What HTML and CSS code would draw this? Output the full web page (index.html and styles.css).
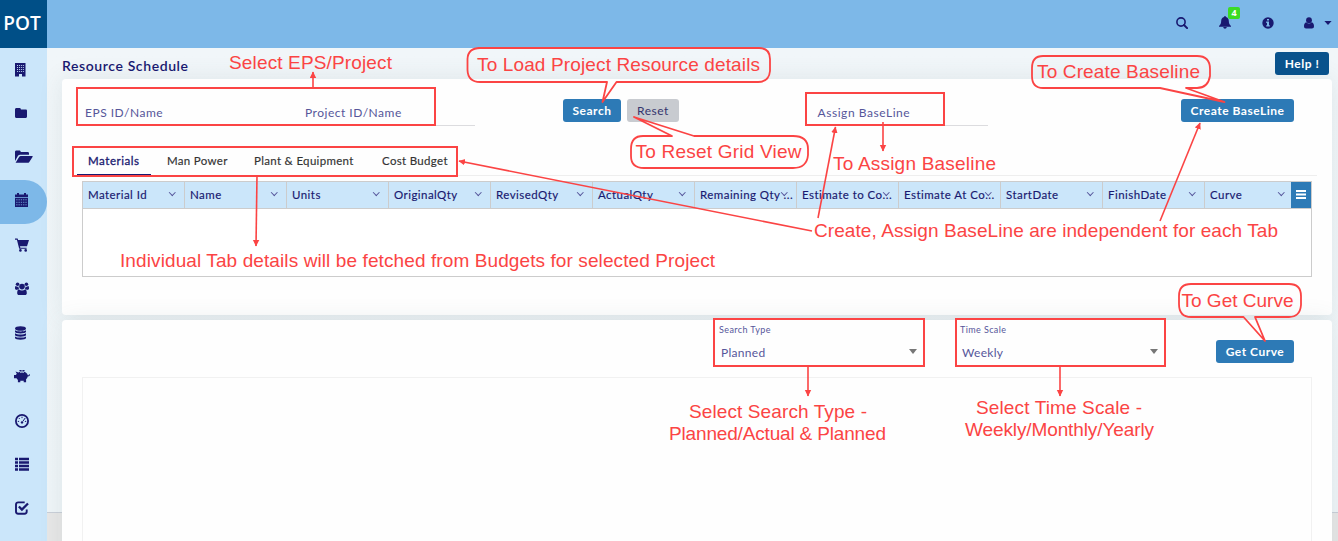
FILE: index.html
```
<!DOCTYPE html>
<html lang="en">
<head>
<meta charset="utf-8">
<title>Resource Schedule</title>
<link rel="stylesheet" href="styles.css">
</head>
<body>
<div class="app">
  <header class="topbar">
    <div class="logo">POT</div>
    <nav class="tools">
      <svg class="tool" width="12" height="12" viewBox="0 0 12 12"><circle cx="5" cy="5" r="4.100" fill="none" stroke="currentColor" stroke-width="1.600"/><path d="M8 8l3.100 3.100" stroke="currentColor" stroke-width="2" stroke-linecap="round"/></svg>
      <span class="bell"><svg width="12" height="13" viewBox="0 0 12 13"><path d="M6 0c.6 0 .9.4.9.9C8.900 1.300 9.800 2.900 9.800 4.800c0 2.800.8 4 2.200 5.200v.7H0V10c1.400-1.200 2.200-2.400 2.200-5.200 0-1.900.9-3.500 2.900-3.900 0-.5.3-.9.9-.9zM4.300 11.100h3.400c0 1-.7 1.700-1.700 1.700s-1.700-.7-1.700-1.700z" fill="currentColor"/></svg><span class="badge">4</span></span>
      <svg class="tool info" width="12" height="12" viewBox="0 0 12 12"><circle cx="6" cy="6" r="5.700" fill="currentColor"/><path d="M5 2h2v1.600H5zM4.200 4.600H7v3.700h.8v1.300H4.200V8.300H5V5.900h-.8z" fill="#7db8e8"/></svg>
      <svg class="tool user" width="10" height="12" viewBox="0 0 10 12"><circle cx="5" cy="3.200" r="2.900" fill="currentColor"/><path d="M2.300 5.300C.7 5.700 0 7.300 0 9.300 0 10.800.9 11.500 2 11.500h6c1.100 0 2-.7 2-2.200 0-2-.7-3.600-2.300-4-.8.8-1.700 1.200-2.700 1.200s-1.900-.4-2.700-1.200z" fill="currentColor"/></svg>
      <svg class="tool" width="8" height="4" viewBox="0 0 8 4"><path d="M.4 0h7.200L4 4z" fill="currentColor"/></svg>
    </nav>
  </header>
  <div class="body">
    <aside class="side">
      <a class="item"><svg width="15" height="14" viewBox="0 0 15 14"><path d="M0 0h10.500v13.500H7V11H4v2.500H0z" fill="currentColor"/><path d="M2 2.500h7M2 4.500h7M2 6.500h7M2 8.500h7" stroke="#cbe6fa" stroke-width=".9" stroke-dasharray="1 .95"/></svg></a>
      <a class="item"><svg width="15" height="14" viewBox="0 0 15 14"><path d="M1.500 2h3c.9 0 1.400.6 1.400 1.500h4.800c.8 0 1.300.5 1.300 1.300v5.700c0 .9-.6 1.500-1.500 1.500h-9C.6 12 0 11.400 0 10.500v-7C0 2.600.6 2 1.500 2z" fill="currentColor"/></svg></a>
      <a class="item"><svg class="wide" width="18" height="14" viewBox="0 0 18 14"><path d="M0 10.900V2C0 1.200.6.600 1.400.600h3c.8 0 1.300.6 1.300 1.400h7c.8 0 1.300.6 1.300 1.300v1.400H5.200c-.9 0-1.700.4-2.200 1.100zM.6 12.800l3.500-5.900c.4-.7 1-1 1.700-1H17c.7 0 .9.400.5 1l-3.200 5c-.4.6-1 .9-1.700.9z" fill="currentColor"/></svg></a>
      <a class="item active"><svg width="15" height="14" viewBox="0 0 15 14"><path d="M0 1.500h2V0h2v1.500h5V0h2v1.500h2v2.700H0zM0 5h13v9H0z" fill="currentColor"/><path d="M1.200 6.800h11M1.200 9.300h11M1.200 11.800h11" stroke="#7db8e8" stroke-width=".8" stroke-dasharray="1.300 1"/></svg></a>
      <a class="item"><svg width="15" height="14" viewBox="0 0 15 14"><path d="M0 .5h2.600l.5 1.400H14l-2 6.300H5l.4 1.500h6.200v1.100H4.200L1.900 1.700H0z" fill="currentColor"/><circle cx="5.400" cy="12.400" r="1.300" fill="currentColor"/><circle cx="10.700" cy="12.400" r="1.300" fill="currentColor"/></svg></a>
      <a class="item"><svg width="15" height="14" viewBox="0 0 15 14"><g fill="currentColor"><circle cx="7" cy="4.600" r="2.800"/><circle cx="2.600" cy="2.200" r="1.800"/><circle cx="11.400" cy="2.200" r="1.800"/><path d="M3.700 7.300C2.500 8 2.200 9.500 2.200 11.300c0 1.200.8 1.800 1.700 1.800h6.200c.9 0 1.700-.6 1.700-1.800 0-1.800-.3-3.300-1.500-4-2 1.700-4.600 1.700-6.600 0zM0 6.500c0-1.300.2-2.300.8-2.500 1 .8 1.700.8 2.700.5 0 1.200.2 1.800.7 2.500-1 0-1.600.3-2.100.9C.9 7.900 0 7.500 0 6.500zM14 6.500c0-1.300-.2-2.300-.8-2.500-1 .8-1.700.8-2.700.5 0 1.200-.2 1.800-.7 2.500 1 0 1.600.3 2.100.9 1.200 0 2.100-.4 2.100-1.400z"/></g></svg></a>
      <a class="item"><svg width="15" height="14" viewBox="0 0 15 14"><g fill="currentColor"><ellipse cx="5.500" cy="2.500" rx="5.500" ry="2.300"/><path d="M0 4.200c2 1.600 9 1.600 11 0v1.600c0 2.300-11 2.300-11 0zM0 7.300c2 1.600 9 1.600 11 0v1.600c0 2.300-11 2.300-11 0zM0 10.400c2 1.600 9 1.600 11 0V12c0 2.300-11 2.300-11 0z"/></g></svg></a>
      <a class="item"><svg class="pig" width="17" height="14" viewBox="0 0 17 14"><path d="M1.500 1.500l3 1C5.500 1.800 6.700 1.400 8 1.400c3 0 5.300 1.500 5.800 3.900.8.2 1.200-.2 1-.9l.8-.4c.7 1.200.1 2.400-1.900 2.400-.2 1.200-.8 2-1.600 2.700v3.200h-2.400v-1.500H6.300v1.500H3.900V9.900L2.500 8.300H0V4.900h1.800l1-1.200z" fill="currentColor"/><path d="M5.800 1.200a2.300 2 0 0 1 4.400 0" stroke="currentColor" stroke-width="1.300" fill="none"/><path d="M6 2.600q2-.7 4 0" stroke="#cbe6fa" stroke-width=".7" fill="none"/></svg></a>
      <a class="item"><svg width="15" height="14" viewBox="0 0 15 14"><circle cx="7" cy="7" r="6.100" fill="none" stroke="currentColor" stroke-width="1.800"/><path d="M7 2.700v1.400M3.800 4l.9.9M10.200 4l-2.400 3.400M2.800 7.400h1.300M9.900 7.400h1.300" stroke="currentColor" stroke-width="1"/><circle cx="7" cy="8.400" r="1.200" fill="currentColor"/></svg></a>
      <a class="item"><svg width="15" height="14" viewBox="0 0 15 14"><path d="M0 2h3M0 5.500h3M0 9h3M0 12.500h3M4 2h10M4 5.500h10M4 9h10M4 12.500h10" stroke="currentColor" stroke-width="2.300"/></svg></a>
      <a class="item"><svg width="15" height="14" viewBox="0 0 15 14"><path d="M9.700 1.400H3.200C1.900 1.400 1 2.300 1 3.600v7C1 11.900 1.900 12.800 3.200 12.800h6.300c1.300 0 2.200-.9 2.200-2.200V8.500" fill="none" stroke="currentColor" stroke-width="1.900"/><path d="M3.900 5.500l3 3.100 6.100-6.100" fill="none" stroke="currentColor" stroke-width="2.300"/></svg></a>
    </aside>
    <main class="main">
      <div class="title-row"><h1 class="title">Resource Schedule</h1><button class="btn help">Help !</button></div>
      <section class="panel schedule">
        <div class="filters">
          <div class="field eps">EPS ID/Name</div>
          <div class="field project">Project ID/Name</div>
          <button class="btn search">Search</button>
          <button class="btn reset">Reset</button>
          <div class="field assign">Assign BaseLine</div>
          <button class="btn create">Create BaseLine</button>
        </div>
        <div class="tabs">
          <div class="tab selected"><span>Materials</span></div><div class="tab man"><span>Man Power</span></div><div class="tab plant"><span>Plant &amp; Equipment</span></div><div class="tab cost"><span>Cost Budget</span></div>
        </div>
        <div class="grid">
          <div class="grid-head">
            <div class="col">Material Id<i class="chev"></i></div>
            <div class="col">Name<i class="chev"></i></div>
            <div class="col">Units<i class="chev"></i></div>
            <div class="col">OriginalQty<i class="chev"></i></div>
            <div class="col">RevisedQty<i class="chev"></i></div>
            <div class="col">ActualQty<i class="chev"></i></div>
            <div class="col">Remaining Qty ...<i class="chev"></i></div>
            <div class="col">Estimate to Co...<i class="chev"></i></div>
            <div class="col">Estimate At Co...<i class="chev"></i></div>
            <div class="col">StartDate<i class="chev"></i></div>
            <div class="col">FinishDate<i class="chev"></i></div>
            <div class="col last">Curve<i class="chev"></i></div>
            <div class="menu"><svg width="10" height="9" viewBox="0 0 10 9"><path d="M0 1h10M0 4.500h10M0 8h10" stroke="#fff" stroke-width="1.800"/></svg></div>
          </div>
        </div>
      </section>
      <section class="panel curve">
        <div class="options">
          <div class="select type"><span class="label">Search Type</span><span class="value">Planned<i class="caret"></i></span></div>
          <div class="select scale"><span class="label">Time Scale</span><span class="value">Weekly<i class="caret"></i></span></div>
          <button class="btn get">Get Curve</button>
        </div>
        <div class="chart"></div>
      </section>
    </main>
  </div>
  <svg class="notes" width="1338" height="541" viewBox="0 0 1338 541">
    <defs><marker id="head" markerUnits="userSpaceOnUse" markerWidth="8" markerHeight="8" refX="6" refY="3.500" orient="auto"><path d="M0 .3L6.500 3.500 0 6.700z" fill="#fb4444"/></marker></defs>
    <g class="frames">
      <rect x="77" y="88" width="358" height="37"/>
      <rect x="73" y="147" width="384" height="29"/>
      <rect x="806" y="93" width="138" height="32"/>
      <rect x="714" y="319" width="210" height="47"/>
      <rect x="956" y="319" width="209" height="47"/>
    </g>
    <g class="arrows">
      <path d="M313 87V72"/><path d="M257 175L256 246"/><path d="M883 122V151"/><path d="M808 367V396"/><path d="M1060 367V396"/>
      <path d="M812 231L459 161"/><path d="M818 218L835.500 127"/><path d="M1160 221L1200 123"/>
    </g>
    <g class="bubbles">
      <path d="M478 48H759Q770 48 770 59V71Q769 82 758 82H616.500L602.500 102 607 82H480Q468 82 467.500 70V59Q468 48 480 48Z"/>
      <path d="M643 136H672L634 117 694 136H793Q808 136 808 149V155Q807 168 793 168H644Q631 168 631 156V149Q631 136 643 136Z"/>
      <path d="M1043 56H1197Q1210 56 1210 69V76Q1208 88 1197 88H1186L1224.500 102 1160 88H1043Q1032 88 1032 76V68Q1032 56 1043 56Z"/>
      <path d="M1191 284H1289Q1301 284 1301 296V305Q1300 317 1289 317H1255L1265 341 1243.500 317H1191Q1179 317 1179 304V296Q1179 284 1191 284Z"/>
    </g>
    <g class="captions">
      <text x="229" y="69" textLength="163">Select EPS/Project</text>
      <text x="477" y="71" textLength="283">To Load Project Resource details</text>
      <text x="1037" y="78" textLength="163">To Create Baseline</text>
      <text x="635.500" y="158" textLength="166">To Reset Grid View</text>
      <text x="833" y="170" textLength="163">To Assign Baseline</text>
      <text x="814" y="237" textLength="464">Create, Assign BaseLine are independent for each Tab</text>
      <text x="120" y="267" textLength="595">Individual Tab details will be fetched from Budgets for selected Project</text>
      <text x="1181.500" y="307" textLength="112">To Get Curve</text>
      <text x="689" y="418" textLength="178">Select Search Type -</text>
      <text x="669" y="440" textLength="217">Planned/Actual &amp; Planned</text>
      <text x="976" y="414" textLength="166">Select Time Scale -</text>
      <text x="965" y="436" textLength="189">Weekly/Monthly/Yearly</text>
    </g>
  </svg>
</div>
</body>
</html>
```

FILE: styles.css
```
* { box-sizing: border-box; }
body { margin: 0; font-family: Lato, sans-serif; font-size: 12px; letter-spacing: .5px; color: #191970; }
.app { position: relative; width: 1338px; height: 541px; overflow: hidden; display: flex; flex-direction: column; }
.topbar { height: 48px; flex: none; background: #7db8e8; display: flex; justify-content: space-between; }
.logo { width: 47px; background: #004f87; color: #fff; font: 600 19px/46px "Open Sans", sans-serif; letter-spacing: 0; text-align: center; padding-right: 3px; }
.tools { display: flex; align-items: center; height: 48px; padding: 0 6px 3px 0; }
.bell { position: relative; display: flex; margin: 0 31px; }
.badge { position: absolute; left: 9px; top: -9px; width: 12px; height: 12px; background: #3bdb25; border-radius: 2px; color: #fff; font: bold 9px/12px "Open Sans", sans-serif; letter-spacing: 0; text-align: center; }
.info { margin-right: 30px; }
.user { margin-right: 10px; }
.body { flex: 1; display: flex; min-height: 0; }
.side { width: 47px; background: #cbe6fa; flex: none; }
.item { display: flex; align-items: center; height: 44px; padding: 0 0 1px 15px; }
.item:nth-child(2) { padding-bottom: 2px; }
.item:nth-child(n+5) { height: 43.900px; padding-bottom: 2px; }
.item.active { background: #7db8e8; border-radius: 0 22px 22px 0; padding-bottom: 4px; }
.item:nth-child(3) { padding-bottom: 2px; }
.pig { margin-left: -1px; }
.main { flex: 1; min-width: 0; padding: 0 6px 0 15px; background: linear-gradient(#f1f6f9 0, #eff5f8 464px, #c9cfd8 464px, #c9cfd8 465px, #e7e7e7 465px); }
.title-row { height: 31px; display: flex; align-items: center; justify-content: space-between; padding: 0 3px 0 0; }
.title { margin: 4px 0 0; font-size: 14px; font-weight: 600; letter-spacing: .6px; }
.btn { border: 0; border-radius: 3px; height: 23px; padding: 0; background: #2d7ab6; color: #fff; font: bold 12px/23px Lato, sans-serif; letter-spacing: .5px; text-align: center; }
.help { width: 54px; background: #09528c; }
.panel { background: #fefefe; border-radius: 4px; box-shadow: 0 0 24px rgba(70, 100, 100, .11); }
.schedule { height: 236px; }
.filters { display: flex; align-items: flex-start; height: 68px; padding: 20px 37px 0 23px; }
.field { width: 170px; height: 27px; border-bottom: 1px solid #dcdcdf; font-size: 12px; line-height: 27px; color: #56569a; letter-spacing: .5px; }
.project { margin-left: 50px; }
.search { width: 58px; margin-left: 88px; }
.reset { width: 52px; margin-left: 6px; background: #c8cbd0; color: #35356d; font-weight: normal; }
.assign { margin-left: 138.500px; letter-spacing: .55px; }
.create { width: 113px; margin: 0 1px 0 auto; }
.tabs { display: flex; gap: 5px; height: 29px; margin: 0 15px; border-bottom: 1px solid #eee; }
.tab { height: 28px; padding-left: 11px; font-size: 11.500px; line-height: 28px; letter-spacing: .32px; color: #333; -webkit-text-stroke: .15px currentColor; }
.tab.selected { width: 74px; border-bottom: 1px solid #191970; color: #191970; letter-spacing: .55px; -webkit-text-stroke-width: .3px; }
.man { width: 82px; }
.plant { width: 123px; }
.grid { height: 96px; margin: 5px 20px 0; border: 1px solid #ccc; background: #fff; }
.grid-head { display: flex; height: 27px; background: #cbe6fa; border-bottom: 1px solid #ccc; }
.col { display: flex; align-items: center; width: 102px; flex: none; border-right: 1px solid #ccc; padding: 0 0 1px 5px; font-size: 11.500px; letter-spacing: .45px; white-space: nowrap; position: relative; -webkit-text-stroke: .15px currentColor; }
.col.last { width: 86px; border: 0; }
.chev { position: absolute; right: 9.500px; top: 7.500px; width: 4.500px; height: 4.500px; border: solid #55559a; border-width: 0 1px 1px 0; transform: rotate(45deg); }
.col.last .chev { right: 7.500px; }
.menu { flex: 0 0 20px; margin-left: auto; background: #2d7ab6; display: flex; align-items: center; justify-content: center; padding-bottom: 1px; }
.curve { height: 260px; margin-top: 5px; overflow: hidden; }
.options { display: flex; height: 57px; padding-left: 657px; }
.select { display: flex; flex-direction: column; width: 200px; padding-top: 4px; color: #56569a; }
.label { font-size: 9px; line-height: 11px; letter-spacing: .4px; }
.value { display: flex; justify-content: space-between; align-items: center; padding-left: 2px; margin-top: 9px; line-height: 18px; letter-spacing: .3px; }
.caret { border: solid transparent; border-width: 5px 4.500px 0; border-top-color: #777; margin: 0 2px 4px 0; }
.scale { margin-left: 41px; }
.get { width: 78px; margin: 20px 0 0 56px; }
.chart { height: 300px; margin: 0 20px; border: 1px solid #f1f1f1; }
.notes { position: absolute; left: 0; top: 0; }
.frames, .arrows, .bubbles { fill: none; stroke: #fb4444; stroke-width: 2; }
.arrows { stroke-width: 1.600; }
.arrows path { marker-end: url(#head); }
.bubbles { stroke-linejoin: round; stroke-width: 1.800; }
.captions { font: 19px "Liberation Sans", Arial, sans-serif; letter-spacing: 0; fill: #fb4444; }
```
